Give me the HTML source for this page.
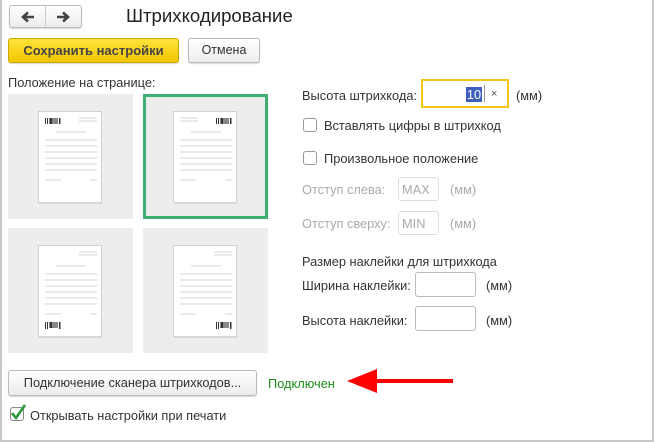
<!DOCTYPE html>
<html><head><meta charset="utf-8"><style>
*{box-sizing:border-box;margin:0;padding:0}
body{width:654px;height:442px;background:#fff;font-family:"Liberation Sans",sans-serif;font-size:12.8px;color:#333;position:relative;overflow:hidden}
.frame{position:absolute;left:0;top:0;width:654px;height:442px;border:2px solid #c8c8c8;border-top:none}
.a{position:absolute;white-space:nowrap}
.btn{position:absolute;border:1px solid #bbb;border-radius:3px;background:linear-gradient(#fff,#ececec);box-shadow:0 1px 1px rgba(0,0,0,.15);text-align:center}
.tile{position:absolute;width:125px;height:125px;background:#ededed}
.tile svg{position:absolute;left:30px;top:17px}
.cb{position:absolute;width:14px;height:14px;border:1px solid #999;border-radius:3px;background:#fff}
.inp{position:absolute;border:1px solid #bbb;border-radius:3px;background:#fff}
.dim{color:#aaa}
</style></head><body>
<div class="frame"></div>
<div class="btn" style="left:9px;top:5px;width:73px;height:23px"></div>
<div class="a" style="left:45px;top:5px;width:1px;height:23px;background:#ccc"></div>
<svg class="a" style="left:20px;top:10px" width="16" height="14" viewBox="0 0 16 14"><path d="M14 7H4M8 2.5L3 7l5 4.5" stroke="#444" stroke-width="2.6" fill="none"/></svg>
<svg class="a" style="left:55px;top:10px" width="16" height="14" viewBox="0 0 16 14"><path d="M2 7h10M8 2.5L13 7l-5 4.5" stroke="#444" stroke-width="2.6" fill="none"/></svg>
<div class="a" style="left:126px;top:5px;font-size:18.6px;color:#222">Штрихкодирование</div>
<div class="btn" style="left:8px;top:38px;width:171px;height:25px;background:linear-gradient(#ffe23a,#f2c600);border-color:#c9a800;font-weight:bold;font-size:13px;line-height:23px;color:#444">Сохранить настройки</div>
<div class="btn" style="left:188px;top:38px;width:72px;height:25px;line-height:23px;font-size:12.5px">Отмена</div>
<div class="a" style="left:8px;top:75px">Положение на странице:</div>
<svg width="0" height="0" style="position:absolute"><defs>
<g id="pg"><rect x="0.5" y="0.5" width="63" height="91" fill="#fff" stroke="#d0d0d8"/><rect x="1" y="91" width="63" height="2" fill="#d8d8dc"/>
<g stroke="#d4d4d8" stroke-width="1"><path d="M7 29h52M7 35h52M7 41h52M7 47h52M7 53h52M7 59h52M18 21h30M7 69h16M52 69h7"/></g></g>
</defs></svg>
<div class="tile" style="left:8px;top:94px"><svg width="65" height="94"><use href="#pg"/><path d="M41 7h18M41 10h18" stroke="#d4d4d8"/><rect x="7" y="7" width="1" height="6" fill="#333"/><rect x="9" y="7" width="1" height="6" fill="#333"/><rect x="11" y="7" width="9" height="6" fill="#888"/><rect x="12" y="7" width="2" height="6" fill="#333"/><rect x="21" y="7" width="1.5" height="6" fill="#333"/></svg></div>
<div class="tile" style="left:143px;top:94px;border:3px solid #3fae73"><svg width="65" height="94" style="left:27px;top:14px"><use href="#pg"/><path d="M7 7h18M7 10h18" stroke="#d4d4d8"/><rect x="43" y="7" width="1" height="6" fill="#333"/><rect x="45" y="7" width="1" height="6" fill="#333"/><rect x="47" y="7" width="9" height="6" fill="#888"/><rect x="48" y="7" width="2" height="6" fill="#333"/><rect x="57" y="7" width="1.5" height="6" fill="#333"/></svg></div>
<div class="tile" style="left:8px;top:228px"><svg width="65" height="94"><use href="#pg"/><path d="M41 7h18M41 10h18" stroke="#d4d4d8"/><rect x="7" y="77" width="1" height="7" fill="#333"/><rect x="9" y="77" width="1" height="7" fill="#333"/><rect x="11" y="77" width="9" height="6" fill="#888"/><rect x="12" y="77" width="2" height="6" fill="#333"/><rect x="21" y="77" width="1.5" height="7" fill="#333"/></svg></div>
<div class="tile" style="left:143px;top:228px"><svg width="65" height="94"><use href="#pg"/><path d="M41 7h18M41 10h18" stroke="#d4d4d8"/><rect x="43" y="77" width="1" height="7" fill="#333"/><rect x="45" y="77" width="1" height="7" fill="#333"/><rect x="47" y="77" width="9" height="6" fill="#888"/><rect x="48" y="77" width="2" height="6" fill="#333"/><rect x="57" y="77" width="1.5" height="7" fill="#333"/></svg></div>

<div class="a" style="left:302px;top:88px">Высота штрихкода:</div>
<div class="a" style="left:421px;top:79px;width:88px;height:29px;border:2px solid #f5c518;background:#fff"></div>
<div class="a" style="left:466px;top:87px;width:16px;height:15px;background:#3f5fbf;color:#fff;line-height:15px;text-align:center">10</div>
<div class="a" style="left:484px;top:85px;width:1px;height:17px;background:#999"></div>
<div class="a" style="left:491px;top:88px;font-size:11px;color:#555">×</div>
<div class="a" style="left:516px;top:88px">(мм)</div>
<div class="cb" style="left:303px;top:118px"></div><div class="a" style="left:324px;top:118px">Вставлять цифры в штрихкод</div>
<div class="cb" style="left:303px;top:151px"></div><div class="a" style="left:324px;top:151px">Произвольное положение</div>
<div class="a dim" style="left:302px;top:182px">Отступ слева:</div>
<div class="inp" style="left:398px;top:177px;width:41px;height:24px;border-color:#ddd"></div><div class="a dim" style="left:402px;top:182px">MAX</div><div class="a dim" style="left:450px;top:182px">(мм)</div>
<div class="a dim" style="left:302px;top:216px">Отступ сверху:</div>
<div class="inp" style="left:398px;top:211px;width:41px;height:24px;border-color:#ddd"></div><div class="a dim" style="left:402px;top:216px">MIN</div><div class="a dim" style="left:450px;top:216px">(мм)</div>
<div class="a" style="left:302px;top:254px">Размер наклейки для штрихкода</div>
<div class="a" style="left:302px;top:278px">Ширина наклейки:</div>
<div class="inp" style="left:415px;top:272px;width:61px;height:25px"></div><div class="a" style="left:486px;top:278px">(мм)</div>
<div class="a" style="left:302px;top:313px">Высота наклейки:</div>
<div class="inp" style="left:415px;top:306px;width:61px;height:25px"></div><div class="a" style="left:486px;top:313px">(мм)</div>

<div class="btn" style="left:8px;top:370px;width:249px;height:26px;line-height:24px">Подключение сканера штрихкодов...</div>
<div class="a" style="left:268px;top:376px;color:#1a8a1a">Подключен</div>
<svg class="a" style="left:345px;top:366px" width="110" height="30"><path d="M108 15H30" stroke="#f00" stroke-width="4"/><path d="M2 15L32 3v24z" fill="#f00"/></svg>
<div class="cb" style="left:10px;top:407px;border-color:#888"></div>
<svg class="a" style="left:9px;top:403px" width="18" height="18"><path d="M3 10l4 5 9-13" stroke="#2a9a3a" stroke-width="2.6" fill="none"/></svg>
<div class="a" style="left:30px;top:408px">Открывать настройки при печати</div>
</body></html>
